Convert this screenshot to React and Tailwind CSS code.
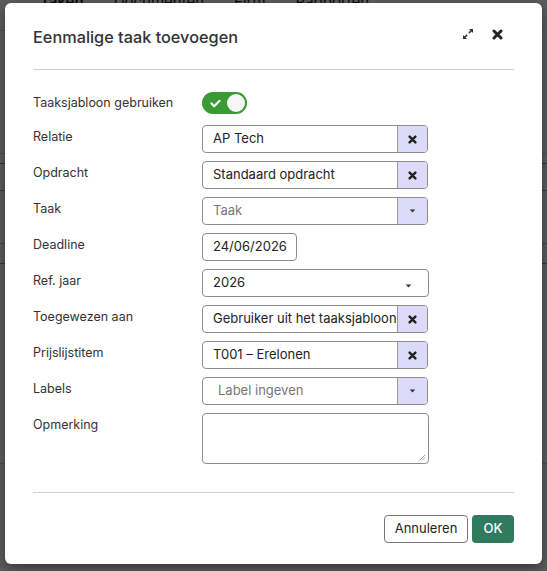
import React from "react";

function XIcon({ className = "" }) {
  return (
    <svg viewBox="0 0 10 10" className={className} fill="none">
      <path d="M1.8 1.8 L8.2 8.2 M8.2 1.8 L1.8 8.2" stroke="currentColor" strokeWidth="2.7" strokeLinecap="round" />
    </svg>
  );
}

function Caret() {
  return (
    <svg viewBox="0 0 8 5" className="w-[7px] h-[4px]">
      <path d="M0.5 0.5 L7.5 0.5 L4 4.5 Z" fill="#333" />
    </svg>
  );
}

function ExpandIcon() {
  return (
    <svg viewBox="0 0 12 12" className="w-[12px] h-[12px]" fill="none">
      <path d="M7 1 H11 V5 Z" fill="#333" />
      <path d="M1 7 V11 H5 Z" fill="#333" />
      <path d="M10 2 L7.3 4.7 M2 10 L4.7 7.3" stroke="#333" strokeWidth="1.6" strokeLinecap="round" />
    </svg>
  );
}

function ClearInput({ value }) {
  return (
    <div className="flex h-[28px] w-[226px] rounded-[4px] border border-[#8c8c8c] overflow-hidden">
      <div className="flex-1 flex items-center pl-[10px] text-[13px] text-[#222] whitespace-nowrap overflow-hidden">{value}</div>
      <div className="w-[30px] flex items-center justify-center bg-[#dcdaf8] border-l border-[#9a9a9a] text-[#222]">
        <XIcon className="w-[9px] h-[9px]" />
      </div>
    </div>
  );
}

function DropInput({ placeholder, pl = "pl-[10px]" }) {
  return (
    <div className="flex h-[28px] w-[226px] rounded-[4px] border border-[#8c8c8c] overflow-hidden">
      <div className={`flex-1 flex items-center ${pl} text-[13px] text-[#777] whitespace-nowrap`}>{placeholder}</div>
      <div className="w-[30px] flex items-center justify-center bg-[#dcdaf8] border-l border-[#9a9a9a]">
        <Caret />
      </div>
    </div>
  );
}

function Row({ label, children, center = false }) {
  return (
    <div className={`flex ${center ? "items-center" : "items-start"}`}>
      <div className={`w-[169px] shrink-0 text-[12.5px] leading-[20px] text-[#333] ${center ? "" : "pt-[2px]"}`}>{label}</div>
      <div>{children}</div>
    </div>
  );
}

export default function App() {
  return (
    <div className="relative w-[547px] h-[571px] overflow-hidden bg-white" style={{ fontFamily: "Inter, 'Noto Sans', sans-serif" }}>
      {/* background page */}
      <div className="absolute inset-0">
        <div className="flex gap-[30px] pl-[40px] -mt-[8px] text-[15px] leading-[20px] text-[#222]">
          <span className="font-semibold">Taken</span>
          <span>Documenten</span>
          <span>Firm</span>
          <span>Rapporten</span>
        </div>
        <div className="absolute left-0 right-0 top-[30px] h-px bg-[#ddd]" />
        <div className="absolute left-0 right-0 top-[153px] h-px bg-[#ccc]" />
        <div className="absolute left-0 right-0 top-[163px] h-px bg-[#999]" />
        <div className="absolute left-0 right-0 top-[190px] h-px bg-[#aaa]" />
        <div className="absolute left-0 right-0 top-[243px] h-px bg-[#bbb]" />
        <div className="absolute left-0 right-0 top-[263px] h-px bg-[#999]" />
        <div className="absolute left-0 right-0 top-[463px] h-px bg-[#ccc]" />
      </div>
      <div className="absolute inset-0 bg-black/[0.64]" />

      {/* modal */}
      <div className="absolute left-[5px] top-[3px] w-[537px] h-[561px] rounded-[6px] bg-white px-[28px] shadow-[0_4px_12px_rgba(0,0,0,0.4)] flex flex-col">
        <div className="flex items-center justify-between pt-[22px] pb-[20px] border-b border-[#d0d0d0]">
          <div className="text-[16.3px] leading-[24px] font-medium text-[#333]">Eenmalige taak toevoegen</div>
          <div className="flex items-center gap-[18px] pr-[11px] -mt-[6px]">
            <ExpandIcon />
            <XIcon className="w-[11px] h-[11px] text-[#222]" />
          </div>
        </div>

        <div className="flex flex-col gap-[8px] pt-[19px]">
          <Row label="Taaksjabloon gebruiken" center>
            <div className="h-[28px] flex items-center">
              <div className="w-[45px] h-[22px] rounded-full bg-[#3a9a34] flex items-center justify-between px-[2px]">
                <svg viewBox="0 0 12 10" className="w-[11px] h-[9px] ml-[6px]" fill="none">
                  <path d="M1.5 5 L4.5 8 L10.5 2" stroke="white" strokeWidth="2.4" strokeLinecap="round" strokeLinejoin="round" />
                </svg>
                <div className="w-[18px] h-[18px] rounded-full bg-[#f7f7f7]" />
              </div>
            </div>
          </Row>
          <Row label="Relatie"><ClearInput value="AP Tech" /></Row>
          <Row label="Opdracht"><ClearInput value="Standaard opdracht" /></Row>
          <Row label="Taak"><DropInput placeholder="Taak" /></Row>
          <Row label="Deadline">
            <div className="h-[28px] w-[95px] rounded-[4px] border border-[#8c8c8c] flex items-center pl-[10px] text-[13px] text-[#222]">24/06/2026</div>
          </Row>
          <Row label="Ref. jaar">
            <div className="h-[28px] w-[227px] rounded-[4px] border border-[#8c8c8c] flex items-center justify-between pl-[10px] pr-[16px] text-[13px] text-[#222]">
              <span>2026</span>
              <span className="mt-[6px]"><Caret /></span>
            </div>
          </Row>
          <Row label="Toegewezen aan"><ClearInput value="Gebruiker uit het taaksjabloon" /></Row>
          <Row label="Prijslijstitem"><ClearInput value="T001 – Erelonen" /></Row>
          <Row label="Labels"><DropInput placeholder="Label ingeven" pl="pl-[15px]" /></Row>
          <Row label="Opmerking">
            <div className="relative h-[51px] w-[227px] rounded-[4px] border border-[#8c8c8c]">
              <svg viewBox="0 0 8 8" className="absolute right-[2px] bottom-[2px] w-[7px] h-[7px]">
                <path d="M7 1 L1 7 M7 4 L4 7" stroke="#888" strokeWidth="0.9" />
              </svg>
            </div>
          </Row>
        </div>

        <div className="mt-[28px] border-t border-[#d0d0d0] pt-[22px] flex justify-end gap-[4px]">
          <button className="h-[28px] w-[84px] rounded-[4px] border border-[#777] bg-white text-[13px] text-[#222]">Annuleren</button>
          <button className="h-[28px] w-[42px] rounded-[4px] bg-[#307a5f] text-[13px] font-medium text-white">OK</button>
        </div>
      </div>
    </div>
  );
}
